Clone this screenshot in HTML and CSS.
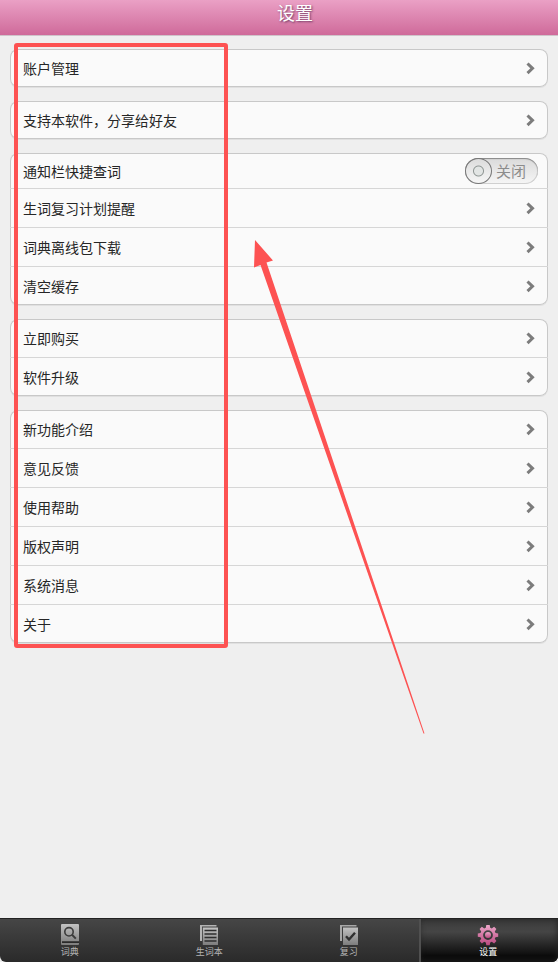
FILE: index.html
```html
<!DOCTYPE html>
<html lang="zh-CN">
<head>
  <meta charset="UTF-8">
  <meta name="viewport" content="width=device-width, initial-scale=1.0">
  <title>设置</title>
  <link rel="stylesheet" href="styles.css">
</head>
<body>
  <svg class="sprite" aria-hidden="true">
    <symbol id="chevron" viewBox="0 0 9 13">
      <path d="M1.5 1.5 L6.5 6.3 L1.5 11.1" fill="none" stroke="#7c7c7c" stroke-width="3"/>
    </symbol>
    <linearGradient id="silver" x1="0" y1="0" x2="0" y2="1">
      <stop offset="0" stop-color="#c2c2c2"/>
      <stop offset="1" stop-color="#7d7d7d"/>
    </linearGradient>
    <linearGradient id="pink" x1="0" y1="0" x2="0" y2="1">
      <stop offset="0" stop-color="#eda6c9"/>
      <stop offset="1" stop-color="#b9487f"/>
    </linearGradient>
  </svg>

  <header class="header">
    <h1>设置</h1>
  </header>

  <main class="settings">
    <ul class="group">
      <li class="row"><a href="#account">账户管理<svg class="chevron"><use href="#chevron"/></svg></a></li>
    </ul>

    <ul class="group">
      <li class="row"><a href="#share">支持本软件，分享给好友<svg class="chevron"><use href="#chevron"/></svg></a></li>
    </ul>

    <ul class="group">
      <li class="row row-switch">
        <label for="quick-search">通知栏快捷查词</label>
        <label class="switch" for="quick-search">
          <input type="checkbox" id="quick-search">
          <span>关闭</span>
        </label>
      </li>
      <li class="row"><a href="#remind">生词复习计划提醒<svg class="chevron"><use href="#chevron"/></svg></a></li>
      <li class="row"><a href="#offline">词典离线包下载<svg class="chevron"><use href="#chevron"/></svg></a></li>
      <li class="row"><a href="#cache">清空缓存<svg class="chevron"><use href="#chevron"/></svg></a></li>
    </ul>

    <ul class="group">
      <li class="row"><a href="#buy">立即购买<svg class="chevron"><use href="#chevron"/></svg></a></li>
      <li class="row"><a href="#upgrade">软件升级<svg class="chevron"><use href="#chevron"/></svg></a></li>
    </ul>

    <ul class="group">
      <li class="row"><a href="#new">新功能介绍<svg class="chevron"><use href="#chevron"/></svg></a></li>
      <li class="row"><a href="#feedback">意见反馈<svg class="chevron"><use href="#chevron"/></svg></a></li>
      <li class="row"><a href="#help">使用帮助<svg class="chevron"><use href="#chevron"/></svg></a></li>
      <li class="row"><a href="#copyright">版权声明<svg class="chevron"><use href="#chevron"/></svg></a></li>
      <li class="row"><a href="#messages">系统消息<svg class="chevron"><use href="#chevron"/></svg></a></li>
      <li class="row"><a href="#about">关于<svg class="chevron"><use href="#chevron"/></svg></a></li>
    </ul>
  </main>

  <nav class="tabs">
    <a class="tab" href="#dict">
      <svg class="tab-icon" viewBox="0 0 22 22">
        <rect x="2" y="0" width="18" height="21" rx="1" fill="url(#silver)"/>
        <path d="M3 17.2h17v1.800H3z" fill="#2a2a2a"/>
        <circle cx="10" cy="7.800" r="4.200" fill="none" stroke="#3c3c3c" stroke-width="1.600"/>
        <path d="M13 10.800l3.800 3.800" stroke="#3c3c3c" stroke-width="2"/>
      </svg>
      词典
    </a>
    <a class="tab" href="#words">
      <svg class="tab-icon" viewBox="0 0 22 22">
        <path d="M2 1h16.500v1.600H4V17H2z" fill="#b4b4b4"/>
        <path d="M4.800 3.500h15.200v17.500H4.800z" fill="url(#silver)"/>
        <path d="M6.500 6.500h12M6.500 10h12M6.500 13.500h12M6.500 17h12" stroke="#2e2e2e" stroke-width="1.500"/>
      </svg>
      生词本
    </a>
    <a class="tab" href="#review">
      <svg class="tab-icon" viewBox="0 0 22 22">
        <path d="M2 1h16.500v1.500H4V17H2z" fill="#a8a8a8"/>
        <path d="M5 3.500h15v17.500H5z" fill="url(#silver)"/>
        <path d="M8 12.300l3 3.200 6-6.800" fill="none" stroke="#303030" stroke-width="2.400"/>
      </svg>
      复习
    </a>
    <a class="tab active" href="#settings">
      <svg class="tab-icon" viewBox="0 0 22 22">
        <g fill="url(#pink)">
          <path fill-rule="evenodd" d="M9.300 1h3.400l.5 2.700 1.600.7 2.300-1.600 2.300 2.300-1.600 2.300.7 1.600 2.700.5v3.200l-2.700.5-.7 1.600 1.600 2.300-2.300 2.300-2.300-1.600-1.600.7-.5 2.700H9.300l-.5-2.700-1.600-.7-2.300 1.600-2.300-2.300 1.600-2.300-.7-1.600-2.700-.5V9.500l2.700-.5.7-1.600-1.600-2.300 2.300-2.300 2.300 1.600 1.600-.7zM11 6.200a4.900 4.900 0 1 0 0 9.800 4.900 4.900 0 0 0 0-9.800z"/>
          <circle cx="11" cy="11.100" r="3"/>
        </g>
      </svg>
      设置
    </a>
  </nav>

  <!-- highlighted area and pointer over the list -->
  <div class="highlight"></div>
  <svg class="arrow" viewBox="0 0 172 495" aria-hidden="true">
    <path d="M2 0 L20 20.500 L13.500 22.500 L171.500 493.500 L170.500 493.500 L7.500 25 L1 27.500 Z" fill="#fd5252"/>
  </svg>
</body>
</html>
```

FILE: styles.css
```css
* {
  box-sizing: border-box;
}
body {
  position: relative;
  display: flex;
  flex-direction: column;
  min-height: 100vh;
  margin: 0;
  font-family: "Noto Sans CJK SC", sans-serif;
  font-size: 14px;
  color: #262626;
  background-color: #efefef;
}
a {
  color: inherit;
  text-decoration: none;
}
.sprite {
  position: absolute;
  width: 0;
  height: 0;
}
.header {
  height: 36px;
  padding-left: 32px;
  text-align: center;
  background: linear-gradient(#eaa0c5, #cf6a9a);
  border-bottom: 1px solid #cfc4ca;
}
.header h1 {
  margin: 0;
  font-size: 18px;
  font-weight: normal;
  line-height: 25px;
  color: #fff;
  text-shadow: 1px 1px 2px rgba(70, 30, 70, 0.7);
}
.settings {
  flex: 1;
  display: flex;
  flex-direction: column;
  gap: 14px;
  padding: 13px 10px;
}
.group {
  margin: 0;
  padding: 0;
  list-style: none;
  background-color: #fafafa;
  border-radius: 8px;
  box-shadow: inset 0 0 0 1px #c8c8c8, 0 1px 0 #e0e0e0;
}
.row {
  display: flex;
  height: 39px;
  border-bottom: 1px solid #d6d6d6;
}
.row:last-child {
  height: 38px;
  border-bottom: none;
}
.row a {
  flex: 1;
  display: flex;
  align-items: center;
  justify-content: space-between;
  padding: 0 13px;
}
.chevron {
  width: 9px;
  height: 13px;
}
.row-switch {
  height: 36px;
  align-items: center;
  justify-content: space-between;
  padding: 0 10px 0 13px;
}

/* Toggle */
.switch {
  display: flex;
  align-items: center;
  gap: 4px;
  width: 73px;
  height: 26px;
  border-radius: 13px;
  font-size: 15px;
  color: #8c8c8c;
  background: linear-gradient(#dadada, #f6f6f6);
  box-shadow: inset 0 1px 1px #888, inset 0 0 0 1px #d0d0d0;
}
.switch input {
  appearance: none;
  width: 27px;
  height: 26px;
  margin: 0;
  border: 1px solid #777;
  border-radius: 50%;
  background: radial-gradient(circle, #e2e5e4 4px, #8f9694 5px, transparent 6px), linear-gradient(#dcdcdc, #f6f6f6);
}

/* Bottom bar */
.tabs {
  display: flex;
  height: 44px;
  border-top: 1px solid #222;
  border-radius: 0 0 6px 6px;
  background: linear-gradient(#464646, #2a2a2a);
  overflow: hidden;
}
.tab {
  flex: 1;
  display: flex;
  flex-direction: column;
  align-items: center;
  padding-top: 5px;
  font-size: 9px;
  line-height: 12px;
  color: #b4b4b4;
}
.tab-icon {
  width: 22px;
  height: 22px;
}
.tab.active {
  color: #fff;
  background: linear-gradient(#3c3c3c, #454545 30%, #0c0c0c 85%);
  box-shadow: inset 2px 0 0 #505050, inset 0 0 6px #222;
}

/* Overlay marks */
.highlight {
  position: absolute;
  left: 14px;
  top: 43px;
  width: 214px;
  height: 605px;
  border: 4px solid #fd5252;
  border-radius: 3px;
  pointer-events: none;
}
.arrow {
  position: absolute;
  left: 253px;
  top: 240px;
  width: 172px;
  height: 495px;
  pointer-events: none;
}
```
